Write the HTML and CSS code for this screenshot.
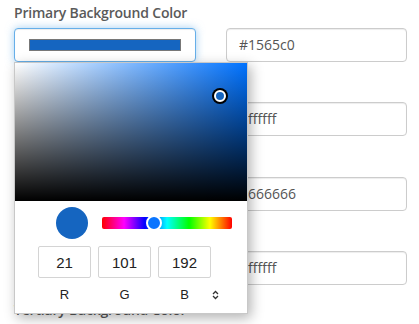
FILE: index.html
```html
<!DOCTYPE html>
<html>
<head>
<meta charset="utf-8">
<link rel="stylesheet" href="styles.css">
</head>
<body>
<div class="page">
  <div class="group">
    <label class="label">Primary Background Color</label>
    <div class="row">
      <div class="picker-col">
        <div class="swatch-input focused"><span class="swatch" style="background:#1565c0"></span></div>
        <div class="popup">
          <div class="sat">
            <span class="point" style="left:205px;top:33px"></span>
          </div>
          <div class="controls">
            <span class="preview" style="background:#1565c0"></span>
            <div class="hue">
              <span class="hue-thumb" style="left:52px"></span>
            </div>
          </div>
          <div class="rgb">
            <div class="rgb-box">21</div>
            <div class="rgb-box">101</div>
            <div class="rgb-box">192</div>
          </div>
          <div class="rgb-labels">
            <span class="rgb-label">R</span>
            <span class="rgb-label">G</span>
            <span class="rgb-label">B</span>
            <svg class="toggle" width="7" height="10" viewBox="0 0 7 10"><path d="M1 4 L3.5 1.5 L6 4 M1 6 L3.5 8.5 L6 6" fill="none" stroke="#333" stroke-width="1.3"/></svg>
          </div>
        </div>
      </div>
      <div class="text-input">#1565c0</div>
    </div>
  </div>
  <div class="group">
    <label class="label">Primary Text Color</label>
    <div class="row">
      <div class="picker-col"><div class="swatch-input"><span class="swatch" style="background:#ffffff"></span></div></div>
      <div class="text-input">#ffffff</div>
    </div>
  </div>
  <div class="group">
    <label class="label">Secondary Background Color</label>
    <div class="row">
      <div class="picker-col"><div class="swatch-input"><span class="swatch" style="background:#666666"></span></div></div>
      <div class="text-input">#666666</div>
    </div>
  </div>
  <div class="group">
    <label class="label">Secondary Text Color</label>
    <div class="row">
      <div class="picker-col"><div class="swatch-input"><span class="swatch" style="background:#ffffff"></span></div></div>
      <div class="text-input">#ffffff</div>
    </div>
  </div>
  <div class="group">
    <label class="label">Tertiary Background Color</label>
    <div class="row">
      <div class="picker-col"><div class="swatch-input"><span class="swatch" style="background:#eeeeee"></span></div></div>
      <div class="text-input">#eeeeee</div>
    </div>
  </div>
</div>
</body>
</html>
```
FILE: styles.css
```css
html, body { margin: 0; padding: 0; background: #fff; }
body { font-family: "Open Sans", "Liberation Sans", sans-serif; font-size: 14px; color: #555; }
.page { padding: 3px 12px 0 14px; width: 393px; }
.group { margin-bottom: 15.33px; }
.label { display: block; font-weight: 600; letter-spacing: -0.2px; line-height: 20px; height: 20px; margin-bottom: 5px; color: #5a5a5a; }
.row { display: grid; grid-template-columns: 182px 181px; column-gap: 30px; }
.picker-col { position: relative; }
.swatch-input, .text-input {
  box-sizing: border-box; height: 34px; border: 1px solid #ccc; border-radius: 4px; background: #fff;
  box-shadow: inset 0 1px 1px rgba(0,0,0,.075);
}
.swatch-input { padding: 10px 14px; }
.swatch-input.focused { border-color: #66afe9; box-shadow: inset 0 1px 1px rgba(0,0,0,.075), 0 0 8px rgba(102,175,233,.6); }
.swatch { display: block; box-sizing: border-box; height: 12px; border: 1px solid #777; }
.text-input { padding: 0 12px; line-height: 32px; color: #555; }
.popup {
  position: absolute; left: 0; top: 34px; z-index: 5; box-sizing: border-box;
  width: 234px; height: 252px; background: #fff; border: 1px solid #c8c8c8;
  box-shadow: 3px 4px 12px rgba(0,0,0,.3);
}
.sat {
  position: relative; height: 138px;
  background: linear-gradient(to top, #000, rgba(0,0,0,0)), linear-gradient(to right, #fff, #0072ff);
}
.point {
  position: absolute; box-sizing: border-box; width: 12px; height: 12px; margin: -6px 0 0 -6px; border-radius: 50%;
  background: #1565c0; border: 2px solid #fff; box-shadow: 0 0 0 2px #000;
}
.controls { display: flex; align-items: center; height: 44px; padding-left: 41px; gap: 14px; }
.preview { width: 32px; height: 32px; border-radius: 50%; flex: none; }
.hue {
  position: relative; width: 130px; height: 12px; border-radius: 2px;
  background: linear-gradient(to right, #f00 0%, #f0f 17%, #00f 33%, #0ff 50%, #0f0 67%, #ff0 83%, #f00 100%);
}
.hue-thumb {
  position: absolute; top: 6px; box-sizing: border-box; width: 16px; height: 16px; margin: -8px 0 0 -8px; border-radius: 50%;
  background: #0a75ff; border: 2px solid #fff;
}
.rgb { display: flex; gap: 7px; padding: 1px 0 0 23px; }
.rgb-box {
  box-sizing: border-box; width: 53px; height: 32px; border: 1px solid #d4d4d4; border-radius: 2px;
  font-family: "Liberation Sans", Arial, sans-serif; font-size: 15px; color: #222;
  display: flex; align-items: center; justify-content: center;
}
.rgb-labels { display: flex; align-items: center; gap: 7px; padding: 9px 0 0 23px; height: 16px; }
.rgb-label { width: 53px; text-align: center; font-family: "Liberation Sans", Arial, sans-serif; font-size: 13px; line-height: 16px; color: #222; }
.toggle { margin-left: -6px; }
```
